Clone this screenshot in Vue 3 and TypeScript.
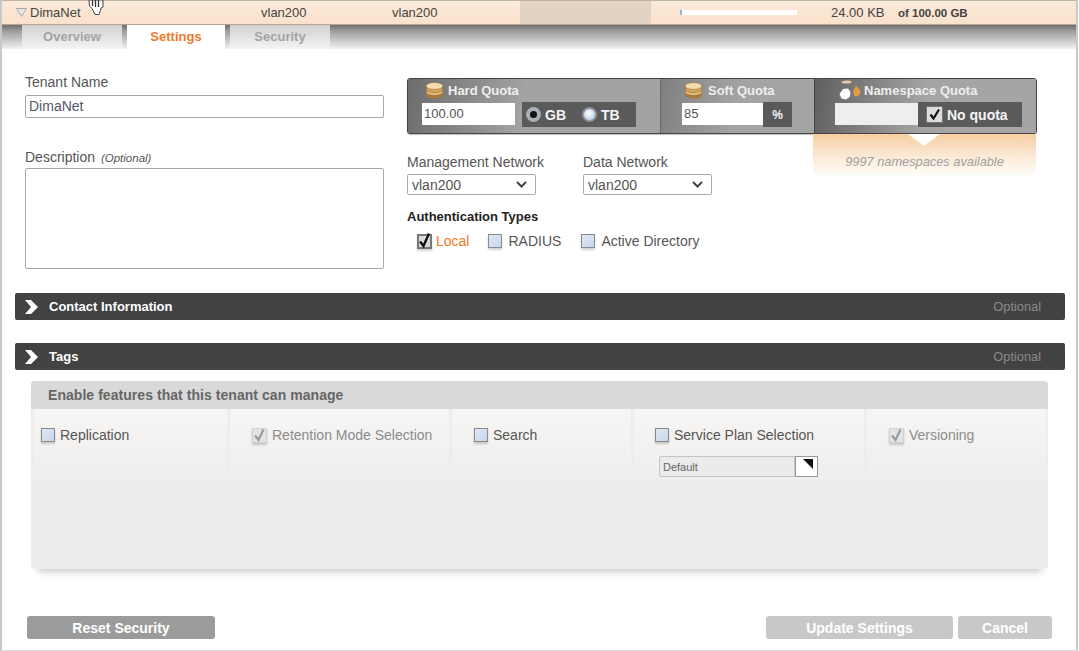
<template>
  <div class="page">
    <!-- tenant row -->
    <div class="tenant-row">
      <div class="cell name-cell">
        <svg class="row-arrow" width="11" height="9" viewBox="0 0 11 9"><path d="M0.5 0.5H10.5L5.5 8.5Z" fill="#e6e6e6" stroke="#aaa" stroke-width="1" /></svg>
        <span>DimaNet</span>
      </div>
      <div class="cell mgmt-cell">vlan200</div>
      <div class="cell data-cell">vlan200</div>
      <div class="cell dark-cell" />
      <div class="cell bar-cell"><div class="usage-bar"><i /></div></div>
      <div class="cell used-cell">24.00 KB</div>
      <div class="cell total-cell">of 100.00 GB</div>
    </div>

    <!-- cursor -->
    <svg class="cursor" width="16" height="15" viewBox="0 0 16 15">
      <path d="M1 0L1.500 6 4 8.500 7 14.500H11L12.500 10.500 13 8 15 7 15 0Z" fill="#fff" stroke="#444" stroke-width="1" />
      <path d="M4.500 0V6M7.500 0V7M10.500 0V7" stroke="#333" stroke-width="1.300" fill="none" />
    </svg>

    <div class="tab-strip">
      <div
        v-for="tab in tabs"
        :key="tab"
        class="tab"
        :class="{ active: tab === 'Settings' }"
      >
        {{ tab }}
      </div>
    </div>

    <div class="form-top">
      <div class="left-col">
        <label class="field-label">Tenant Name</label>
        <div class="text-box name-box">DimaNet</div>
        <label class="field-label desc-label">Description <em>(Optional)</em></label>
        <div class="text-box desc-box" />
      </div>

      <div class="right-col">
        <div class="quota-panel">
          <div class="quota hard">
            <div class="quota-title">
              <svg class="coins" width="19" height="17" viewBox="0 0 19 17">
                <ellipse cx="9.500" cy="13" rx="8.500" ry="3.500" fill="#a87b3c" />
                <ellipse cx="9.500" cy="10" rx="8.500" ry="3.500" fill="#e6bd77" stroke="#8c672f" stroke-width=".6" />
                <ellipse cx="9.500" cy="7" rx="8.500" ry="3.500" fill="#d9a95e" stroke="#8c672f" stroke-width=".6" />
                <ellipse cx="9.500" cy="4" rx="8.500" ry="3.500" fill="#f0dcae" stroke="#8c672f" stroke-width=".6" />
              </svg>
              Hard Quota
            </div>
            <div class="quota-inputs">
              <div class="quota-input hard-input">100.00</div>
              <div class="unit-box radios">
                <span class="radio on" /><b>GB</b>
                <span class="radio" /><b>TB</b>
              </div>
            </div>
          </div>
          <div class="quota soft">
            <div class="quota-title soft-title">
              <svg class="coins" width="19" height="17" viewBox="0 0 19 17">
                <ellipse cx="9.500" cy="13" rx="8.500" ry="3.500" fill="#a87b3c" />
                <ellipse cx="9.500" cy="10" rx="8.500" ry="3.500" fill="#e6bd77" stroke="#8c672f" stroke-width=".6" />
                <ellipse cx="9.500" cy="7" rx="8.500" ry="3.500" fill="#d9a95e" stroke="#8c672f" stroke-width=".6" />
                <ellipse cx="9.500" cy="4" rx="8.500" ry="3.500" fill="#f0dcae" stroke="#8c672f" stroke-width=".6" />
              </svg>
              Soft Quota
            </div>
            <div class="quota-inputs">
              <div class="quota-input soft-input">85</div>
              <div class="unit-box percent">%</div>
            </div>
          </div>
          <div class="quota ns">
            <div class="quota-title ns-title">
              <svg class="ns-icon" width="24" height="20" viewBox="0 0 24 20">
                <path d="M3 2Q8 -0.500 14 1.500L12 3.500H5Z" fill="#e3c8a4" />
                <path d="M5 9L10 8.500 12.500 12 12 16.500 8 19.500 3.500 18.500 1.500 14Z" fill="#fff" />
                <path d="M18 5.500L21.500 9.500 22.500 13 20 16.500 16.500 16 15 11.500Z" fill="#e69a3e" />
              </svg>
              Namespace Quota
            </div>
            <div class="quota-inputs">
              <div class="quota-input ns-input" />
              <div class="unit-box no-quota">
                <span class="ns-check">
                  <svg width="13" height="13" viewBox="0 0 13 13"><path d="M2.500 6.500L5.500 10.500 11 1.500" fill="none" stroke="#111" stroke-width="2.200" /></svg>
                </span>
                <b>No quota</b>
              </div>
            </div>
          </div>
        </div>

        <div class="under-panel">
          <div class="network-col">
            <div class="networks">
              <div class="network">
                <label class="field-label">Management Network</label>
                <div class="select-box">vlan200
                  <svg width="11" height="7" viewBox="0 0 11 7"><path d="M1 1L5.500 5.500 10 1" fill="none" stroke="#444" stroke-width="2" /></svg>
                </div>
              </div>
              <div class="network">
                <label class="field-label">Data Network</label>
                <div class="select-box">vlan200
                  <svg width="11" height="7" viewBox="0 0 11 7"><path d="M1 1L5.500 5.500 10 1" fill="none" stroke="#444" stroke-width="2" /></svg>
                </div>
              </div>
            </div>
            <div class="auth-title">Authentication Types</div>
            <div class="auth-types">
              <span v-for="a in authTypes" :key="a.label" class="check-row" :class="{ local: a.checked }">
                <span class="check">
                  <svg v-if="a.checked" class="tick" width="15" height="17" viewBox="0 0 15 17"><path d="M3 9.500L6.500 14 12 1.500" fill="none" stroke="#111" stroke-width="2.400" /></svg>
                </span>
                {{ a.label }}
              </span>
            </div>
          </div>
          <div class="ns-callout">
            <i class="notch" />
            9997 namespaces available
          </div>
        </div>
      </div>
    </div>

    <div class="section-bar contact-bar">
      <svg width="15" height="14" viewBox="0 0 15 14"><path d="M1 0H7L14 7 7 14H1L7 7Z" fill="#fff" /></svg>
      <span class="bar-title">Contact Information</span>
      <span class="bar-optional">Optional</span>
    </div>
    <div class="section-bar tags-bar">
      <svg width="15" height="14" viewBox="0 0 15 14"><path d="M1 0H7L14 7 7 14H1L7 7Z" fill="#fff" /></svg>
      <span class="bar-title">Tags</span>
      <span class="bar-optional">Optional</span>
    </div>

    <div class="features">
      <div class="features-head">Enable features that this tenant can manage</div>
      <div class="features-cols">
        <div
          v-for="f in features"
          :key="f.label"
          class="feature"
          :style="{ width: f.width + 'px' }"
        >
          <div class="check-row" :class="{ disabled: f.locked }">
            <span class="check" :class="{ locked: f.locked }">
              <svg v-if="f.locked" class="tick" width="15" height="15" viewBox="0 0 15 15"><path d="M3 7.500L6.500 12 11.500 1.500" fill="none" stroke="#999" stroke-width="2.200" /></svg>
            </span>
            {{ f.label }}
          </div>
          <div v-if="f.plan" class="plan-select">
            <span class="plan-value">Default</span>
            <span class="plan-btn"><svg width="10" height="10" viewBox="0 0 10 10"><path d="M0 0H10V10Z" fill="#111" /></svg></span>
          </div>
        </div>
      </div>
    </div>

    <div class="actions">
      <button class="btn reset">Reset Security</button>
      <div class="actions-right">
        <button class="btn update">Update Settings</button>
        <button class="btn cancel">Cancel</button>
      </div>
    </div>
  </div>
</template>

<script setup lang="ts">
const tabs = ['Overview', 'Settings', 'Security'];

const authTypes = [
  { label: 'Local', checked: true },
  { label: 'RADIUS', checked: false },
  { label: 'Active Directory', checked: false },
];

const features = [
  { label: 'Replication', width: 193, locked: false, plan: false },
  { label: 'Retention Mode Selection', width: 219, locked: true, plan: false },
  { label: 'Search', width: 179, locked: false, plan: false },
  { label: 'Service Plan Selection', width: 230, locked: false, plan: true },
  { label: 'Versioning', width: 179, locked: true, plan: false },
];
</script>

<style>
html,
body {
  margin: 0;
  background: #fff;
}
</style>

<style scoped>
.page {
  position: relative;
  box-sizing: border-box;
  width: 1078px;
  height: 651px;
  overflow: hidden;
  background: #fff;
  border-left: 2px solid #c8c8c8;
  border-right: 2px solid #c8c8c8;
  border-bottom: 1px solid #d8d8d8;
  font-family: "Liberation Sans", Arial, sans-serif;
  color: #555;
}

.tenant-row {
  display: flex;
  height: 25px;
  box-sizing: border-box;
  border-top: 1px solid #bdb5aa;
  border-bottom: 1px solid #b8a48c;
  background: linear-gradient(#fbe9d8, #f9e2cc);
  font-size: 13px;
  color: #444;
}

.cell {
  display: flex;
  align-items: center;
  box-sizing: border-box;
  height: 100%;
}

.name-cell {
  width: 259px;
  padding-left: 14px;
  gap: 3px;
}

.mgmt-cell {
  width: 131px;
}

.data-cell {
  width: 128px;
}

.dark-cell {
  width: 131px;
  background: #e2d3c2;
}

.bar-cell {
  width: 180px;
  padding-left: 29px;
}

.usage-bar {
  width: 117px;
  height: 5px;
  background: #fff;
}

.usage-bar i {
  display: block;
  width: 2px;
  height: 5px;
  background: #8db8dc;
}

.used-cell {
  width: 67px;
}

.total-cell {
  font-size: 11.500px;
  font-weight: bold;
}

.cursor {
  position: absolute;
  left: 86px;
  top: 0;
}

.tab-strip {
  display: flex;
  gap: 5px;
  height: 24px;
  padding-left: 20px;
  background: linear-gradient(#6e6e6e, #9c9c9c 25%, #f2f2f2);
}

.tab {
  width: 100px;
  line-height: 24px;
  text-align: center;
  font-size: 13px;
  font-weight: bold;
  color: #a3a3a3;
  background: linear-gradient(#d0d0d0, #f4f4f4);
}

.tab.active {
  width: 98px;
  color: #f07a2a;
  background: #fff;
}

.form-top {
  display: flex;
  padding: 25px 0 0 23px;
  height: 244px;
  box-sizing: border-box;
}

.left-col {
  width: 359px;
  margin-right: 23px;
  flex: none;
}

.field-label {
  display: block;
  font-size: 14px;
  line-height: 16px;
  color: #555;
}

.text-box {
  box-sizing: border-box;
  border: 1px solid #a8a8a8;
  border-radius: 2px;
  background: #fff;
  font-size: 14px;
  color: #556;
}

.name-box {
  width: 359px;
  height: 23px;
  margin-top: 5px;
  padding: 2px 3px;
  line-height: 17px;
}

.desc-label {
  margin-top: 31px;
}

.desc-label em {
  font-size: 11.500px;
  margin-left: 2px;
}

.desc-box {
  width: 359px;
  height: 101px;
  margin-top: 2px;
}

.right-col {
  width: 631px;
  padding-top: 4px;
  flex: none;
}

.quota-panel {
  display: flex;
  box-sizing: border-box;
  width: 630px;
  height: 56px;
  border: 1px solid #444;
  border-radius: 3px;
  background: #9c9c9c;
  box-shadow: 0 1px 1px rgba(0, 0, 0, .25);
}

.quota {
  box-sizing: border-box;
  height: 100%;
}

.hard {
  width: 253px;
  padding-left: 14px;
  background: linear-gradient(100deg, #6c6c6c, #a2a2a2 45%, #a2a2a2);
  border-right: 1px dashed #666;
}

.soft {
  width: 153px;
  padding-left: 21px;
  background: linear-gradient(100deg, #7f7f7f, #a4a4a4 50%);
}

.ns {
  flex: 1;
  padding-left: 20px;
  border-left: 1px solid #444;
  background: linear-gradient(100deg, #5f5f5f, #a5a5a5 50%);
}

.quota-title {
  display: flex;
  align-items: center;
  gap: 4px;
  height: 22px;
  padding: 0 0 2px 3px;
  font-size: 13px;
  font-weight: bold;
  color: #eee;
  white-space: nowrap;
}

.soft-title {
  gap: 5px;
  padding-left: 2px;
}

.ns-title {
  gap: 2px;
  padding-left: 3px;
}

.quota-inputs {
  display: flex;
  height: 23px;
}

.quota-input {
  box-sizing: border-box;
  height: 22px;
  line-height: 22px;
  background: #fff;
  font-size: 13px;
  color: #555;
}

.hard-input {
  width: 93px;
  padding-left: 2px;
  margin-right: 7px;
}

.soft-input {
  width: 81px;
  padding-left: 2px;
}

.ns-input {
  width: 83px;
  background: #eee;
}

.unit-box {
  display: flex;
  align-items: center;
  height: 25px;
  margin-top: -1px;
  background: #5a5a5a;
  color: #f4f4f4;
  font-size: 14px;
}

.radios {
  width: 114px;
  box-sizing: border-box;
  padding-left: 4px;
}

.radios b {
  margin: 0 16px 0 4px;
}

.radio {
  display: inline-block;
  box-sizing: border-box;
  width: 15px;
  height: 15px;
  border-radius: 50%;
  border: 2px solid #8f959e;
  background: radial-gradient(circle at 45% 40%, #fff, #a9c0e0);
}

.radio.on {
  background: #111;
  border: 4px solid #a9b0ba;
}

.percent {
  width: 29px;
  justify-content: center;
  font-size: 12px;
  font-weight: bold;
}

.no-quota {
  width: 104px;
  box-sizing: border-box;
  padding-left: 8px;
  gap: 4px;
}

.ns-check {
  display: inline-flex;
  box-sizing: border-box;
  width: 17px;
  height: 17px;
  padding: 1px;
  border: 1px solid #777;
  background: #ddd;
}

.under-panel {
  display: flex;
}

.network-col {
  width: 406px;
  padding-top: 20px;
  flex: none;
}

.networks {
  display: flex;
}

.network {
  width: 176px;
}

.select-box {
  display: flex;
  align-items: center;
  justify-content: space-between;
  box-sizing: border-box;
  width: 129px;
  height: 21px;
  margin-top: 4px;
  padding: 0 8px 0 4px;
  border: 1px solid #a8a8a8;
  border-radius: 2px;
  font-size: 14px;
  color: #555;
}

.auth-title {
  margin-top: 14px;
  font-size: 13px;
  font-weight: bold;
  line-height: 15px;
  color: #222;
}

.auth-types {
  display: flex;
  gap: 19px;
  margin-top: 9px;
  padding-left: 10px;
}

.auth-types .check-row:last-child {
  margin-left: 1px;
}

.auth-types .check-row {
  gap: 6px;
}

.check-row {
  display: flex;
  align-items: center;
  gap: 5px;
  font-size: 14px;
  line-height: 16px;
  color: #555;
  white-space: nowrap;
}

.auth-types .check-row.local {
  color: #f07a2a;
  gap: 4px;
}

.check-row.disabled {
  color: #8c8c8c;
}

.check {
  position: relative;
  display: inline-block;
  flex: none;
  box-sizing: border-box;
  width: 14px;
  height: 14px;
  border: 1px solid #8a8a8a;
  background: linear-gradient(135deg, #dfe8f4, #c6d6ea);
  box-shadow: 0 2px 2px rgba(0, 0, 0, .18);
}

.check.locked {
  width: 15px;
  height: 15px;
  background: #e4e4e4;
  border-color: #d0d0d0;
}

.local .check {
  width: 15px;
  height: 15px;
  background: #dcdcdc;
  border: 2px solid #777;
}

.tick {
  position: absolute;
  left: -1px;
  bottom: -1px;
}

.local .tick {
  left: -2px;
  bottom: -2px;
}

.ns-callout {
  position: relative;
  box-sizing: border-box;
  width: 223px;
  height: 44px;
  padding-top: 21px;
  text-align: center;
  font-size: 12.800px;
  line-height: 14px;
  font-style: italic;
  color: #a0a0a0;
  background: linear-gradient(#f6cfa3, #fbe9d5 50%, #fff);
}

.notch {
  position: absolute;
  left: 95px;
  top: 0;
  width: 0;
  height: 0;
  border-left: 16px solid transparent;
  border-right: 16px solid transparent;
  border-top: 12px solid #fff;
}

.section-bar {
  display: flex;
  align-items: center;
  box-sizing: border-box;
  width: 1050px;
  height: 27px;
  margin-left: 13px;
  padding: 0 24px 0 9px;
  background: #424242;
  border-radius: 2px;
  color: #fff;
}

.tags-bar {
  margin-top: 23px;
}

.bar-title {
  margin-left: 10px;
  font-size: 13px;
  font-weight: bold;
}

.bar-optional {
  margin-left: auto;
  font-size: 12.800px;
  color: #8a8a8a;
}

.features {
  box-sizing: border-box;
  width: 1017px;
  height: 188px;
  margin: 11px 0 0 29px;
  border-radius: 4px;
  background: #eeedeb;
  box-shadow: 0 9px 8px -7px rgba(0, 0, 0, .25);
}

.features-head {
  height: 28px;
  padding-left: 17px;
  line-height: 28px;
  font-size: 14px;
  font-weight: bold;
  letter-spacing: .05px;
  color: #666;
  background: #d9d9d9;
  border-radius: 4px 4px 0 0;
}

.features-cols {
  display: flex;
  gap: 3px;
  padding: 0 3px;
}

.feature {
  flex: none;
  box-sizing: border-box;
  height: 76px;
  padding: 18px 0 0 7px;
  background: linear-gradient(#f7f6f5, #eeedeb);
}

.feature:nth-child(2),
.feature:nth-child(3),
.feature:nth-child(5) {
  padding-left: 22px;
}

.feature:nth-child(4) {
  padding-left: 21px;
}

.plan-select {
  display: flex;
  margin: 13px 0 0 4px;
  height: 21px;
}

.plan-value {
  box-sizing: border-box;
  width: 136px;
  height: 21px;
  padding-left: 3px;
  line-height: 21px;
  font-size: 11px;
  color: #666;
  background: #ebebeb;
  border: 1px solid #c4c4c4;
  border-radius: 2px 0 0 2px;
}

.plan-btn {
  display: flex;
  justify-content: center;
  box-sizing: border-box;
  width: 23px;
  height: 21px;
  padding: 2px 0 0 2px;
  background: #fff;
  border: 1px solid #999;
}

.actions {
  display: flex;
  justify-content: space-between;
  width: 1025px;
  margin: 47px 0 0 25px;
}

.actions-right {
  display: flex;
  gap: 5px;
}

.btn {
  height: 23px;
  padding: 0;
  border: none;
  border-radius: 3px;
  font-family: inherit;
  font-size: 14px;
  font-weight: bold;
  color: #fff;
}

.reset {
  width: 188px;
  background: #9b9b9b;
}

.update {
  width: 187px;
  background: #c8c8c8;
}

.cancel {
  width: 94px;
  background: #c8c8c8;
}
</style>
